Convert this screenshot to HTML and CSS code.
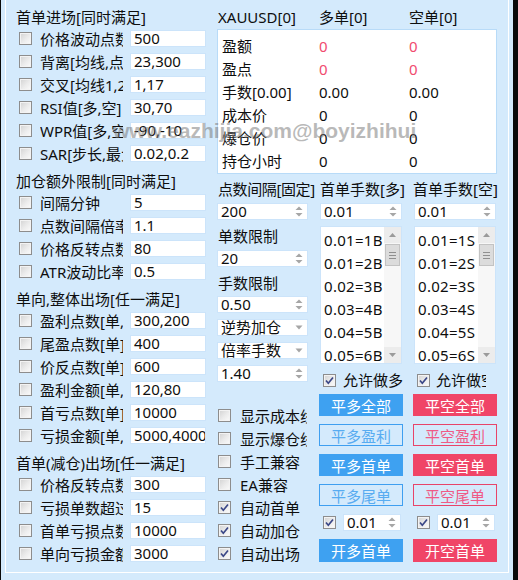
FILE: index.html
```html
<!DOCTYPE html>
<html>
<head>
<meta charset="utf-8">
<link rel="stylesheet" href="styles.css">
</head>
<body>
<div class="window">
  <div class="frame">
    <div class="left">
      <div class="sec-title first">首单进场[同时满足]</div>
      <div class="row"><span class="cb"></span><span class="lbl">价格波动点数</span><span class="inp">500</span></div>
      <div class="row"><span class="cb"></span><span class="lbl">背离[均线,点数]</span><span class="inp">23,300</span></div>
      <div class="row"><span class="cb"></span><span class="lbl">交叉[均线1,2]</span><span class="inp">1,17</span></div>
      <div class="row"><span class="cb"></span><span class="lbl">RSI值[多,空]</span><span class="inp">30,70</span></div>
      <div class="row"><span class="cb"></span><span class="lbl">WPR值[多,空]</span><span class="inp">-90,-10</span></div>
      <div class="row"><span class="cb"></span><span class="lbl">SAR[步长,最大]</span><span class="inp">0.02,0.2</span></div>

      <div class="sec-title">加仓额外限制[同时满足]</div>
      <div class="row"><span class="cb"></span><span class="lbl">间隔分钟</span><span class="inp">5</span></div>
      <div class="row"><span class="cb"></span><span class="lbl">点数间隔倍率</span><span class="inp">1.1</span></div>
      <div class="row"><span class="cb"></span><span class="lbl">价格反转点数</span><span class="inp">80</span></div>
      <div class="row"><span class="cb"></span><span class="lbl">ATR波动比率</span><span class="inp">0.5</span></div>

      <div class="sec-title">单向,整体出场[任一满足]</div>
      <div class="row"><span class="cb"></span><span class="lbl">盈利点数[单,整]</span><span class="inp">300,200</span></div>
      <div class="row"><span class="cb"></span><span class="lbl">尾盈点数[单]</span><span class="inp">400</span></div>
      <div class="row"><span class="cb"></span><span class="lbl">价反点数[单]</span><span class="inp">600</span></div>
      <div class="row"><span class="cb"></span><span class="lbl">盈利金额[单,整]</span><span class="inp">120,80</span></div>
      <div class="row"><span class="cb"></span><span class="lbl">首亏点数[单]</span><span class="inp">10000</span></div>
      <div class="row"><span class="cb"></span><span class="lbl">亏损金额[单,整]</span><span class="inp">5000,4000</span></div>

      <div class="sec-title">首单(减仓)出场[任一满足]</div>
      <div class="row"><span class="cb"></span><span class="lbl">价格反转点数</span><span class="inp">300</span></div>
      <div class="row"><span class="cb"></span><span class="lbl">亏损单数超过</span><span class="inp">15</span></div>
      <div class="row"><span class="cb"></span><span class="lbl">首单亏损点数</span><span class="inp">10000</span></div>
      <div class="row"><span class="cb"></span><span class="lbl">单向亏损金额</span><span class="inp">3000</span></div>
    </div>

    <div class="mid">
      <div class="stats-head"><span>XAUUSD[0]</span><span>多单[0]</span><span>空单[0]</span></div>
      <div class="stats">
        <div class="srow"><span>盈额</span><span class="red">0</span><span class="red">0</span></div>
        <div class="srow"><span>盈点</span><span class="red">0</span><span class="red">0</span></div>
        <div class="srow"><span>手数[0.00]</span><span>0.00</span><span>0.00</span></div>
        <div class="srow"><span>成本价</span><span>0</span><span>0</span></div>
        <div class="srow"><span>爆仓价</span><span>0</span><span>0</span></div>
        <div class="srow"><span>持仓小时</span><span>0</span><span>0</span></div>
      </div>

      <div class="cols">
        <div class="colA">
          <div class="clabel tight">点数间隔[固定]</div>
          <div class="spin s1"><span class="val">200</span><svg class="arr" width="8" height="13" viewBox="0 0 8 13"><polygon points="0.5,5 4,1.5 7.5,5" /><polygon points="0.5,8 4,11.5 7.5,8" /></svg></div>
          <div class="clabel l2">单数限制</div>
          <div class="spin s1"><span class="val">20</span><svg class="arr" width="8" height="13" viewBox="0 0 8 13"><polygon points="0.5,5 4,1.5 7.5,5" /><polygon points="0.5,8 4,11.5 7.5,8" /></svg></div>
          <div class="clabel l2">手数限制</div>
          <div class="spin s2"><span class="val">0.50</span><svg class="arr" width="8" height="13" viewBox="0 0 8 13"><polygon points="0.5,5 4,1.5 7.5,5" /><polygon points="0.5,8 4,11.5 7.5,8" /></svg></div>
          <div class="spin s3"><span class="val">逆势加仓</span><svg class="arr" width="8" height="5" viewBox="0 0 8 5"><polygon points="0.5,0.5 7.5,0.5 4,4.5" /></svg></div>
          <div class="spin s3"><span class="val">倍率手数</span><svg class="arr" width="8" height="5" viewBox="0 0 8 5"><polygon points="0.5,0.5 7.5,0.5 4,4.5" /></svg></div>
          <div class="spin s3"><span class="val">1.40</span><svg class="arr" width="8" height="13" viewBox="0 0 8 13"><polygon points="0.5,5 4,1.5 7.5,5" /><polygon points="0.5,8 4,11.5 7.5,8" /></svg></div>

          <div class="opts">
            <div class="orow"><span class="cb"></span><span class="olbl">显示成本线</span></div>
            <div class="orow"><span class="cb"></span><span class="olbl">显示爆仓线</span></div>
            <div class="orow"><span class="cb"></span><span class="olbl">手工兼容</span></div>
            <div class="orow"><span class="cb"></span><span class="olbl">EA兼容</span></div>
            <div class="orow"><span class="cb on"><svg width="11" height="11" viewBox="0 0 11 11"><path d="M2 5.5 L4.3 8.2 L9 2.5"/></svg></span><span class="olbl">自动首单</span></div>
            <div class="orow"><span class="cb on"><svg width="11" height="11" viewBox="0 0 11 11"><path d="M2 5.5 L4.3 8.2 L9 2.5"/></svg></span><span class="olbl">自动加仓</span></div>
            <div class="orow"><span class="cb on"><svg width="11" height="11" viewBox="0 0 11 11"><path d="M2 5.5 L4.3 8.2 L9 2.5"/></svg></span><span class="olbl">自动出场</span></div>
          </div>
        </div>

        <div class="colB">
          <div class="clabel">首单手数[多]</div>
          <div class="spin s1 inset"><span class="val">0.01</span><svg class="arr" width="8" height="13" viewBox="0 0 8 13"><polygon points="0.5,5 4,1.5 7.5,5" /><polygon points="0.5,8 4,11.5 7.5,8" /></svg></div>
          <div class="list">
            <div class="items">
              <div>0.01=1B</div><div>0.01=2B</div><div>0.02=3B</div><div>0.03=4B</div><div>0.04=5B</div><div>0.05=6B</div>
            </div>
            <div class="sbar">
              <div class="sbtn"><svg width="7" height="4" viewBox="0 0 7 4"><polygon points="0,4 3.5,0 7,4"/></svg></div>
              <div class="thumb"><i></i><i></i><i></i></div>
              <div class="sbtn down"><svg width="7" height="4" viewBox="0 0 7 4"><polygon points="0,0 3.5,4 7,0"/></svg></div>
            </div>
          </div>
          <div class="crow"><span class="cb on"><svg width="11" height="11" viewBox="0 0 11 11"><path d="M2 5.5 L4.3 8.2 L9 2.5"/></svg></span><span class="clbl">允许做多</span></div>
          <div class="btn blue first">平多全部</div>
          <div class="btn oblue">平多盈利</div>
          <div class="btn blue">平多首单</div>
          <div class="btn oblue">平多尾单</div>
          <div class="lotrow"><span class="cb on"><svg width="11" height="11" viewBox="0 0 11 11"><path d="M2 5.5 L4.3 8.2 L9 2.5"/></svg></span><div class="spin lot"><span class="val">0.01</span><svg class="arr" width="8" height="13" viewBox="0 0 8 13"><polygon points="0.5,5 4,1.5 7.5,5" /><polygon points="0.5,8 4,11.5 7.5,8" /></svg></div></div>
          <div class="btn blue last">开多首单</div>
        </div>

        <div class="colC">
          <div class="clabel c">首单手数[空]</div>
          <div class="spin s1 inset"><span class="val">0.01</span><svg class="arr" width="8" height="13" viewBox="0 0 8 13"><polygon points="0.5,5 4,1.5 7.5,5" /><polygon points="0.5,8 4,11.5 7.5,8" /></svg></div>
          <div class="list">
            <div class="items">
              <div>0.01=1S</div><div>0.01=2S</div><div>0.02=3S</div><div>0.03=4S</div><div>0.04=5S</div><div>0.05=6S</div>
            </div>
            <div class="sbar">
              <div class="sbtn"><svg width="7" height="4" viewBox="0 0 7 4"><polygon points="0,4 3.5,0 7,4"/></svg></div>
              <div class="thumb"><i></i><i></i><i></i></div>
              <div class="sbtn down"><svg width="7" height="4" viewBox="0 0 7 4"><polygon points="0,0 3.5,4 7,0"/></svg></div>
            </div>
          </div>
          <div class="crow"><span class="cb on"><svg width="11" height="11" viewBox="0 0 11 11"><path d="M2 5.5 L4.3 8.2 L9 2.5"/></svg></span><span class="clbl short">允许做空</span></div>
          <div class="btn red first">平空全部</div>
          <div class="btn ored">平空盈利</div>
          <div class="btn red">平空首单</div>
          <div class="btn ored">平空尾单</div>
          <div class="lotrow"><span class="cb on"><svg width="11" height="11" viewBox="0 0 11 11"><path d="M2 5.5 L4.3 8.2 L9 2.5"/></svg></span><div class="spin lot"><span class="val">0.01</span><svg class="arr" width="8" height="13" viewBox="0 0 8 13"><polygon points="0.5,5 4,1.5 7.5,5" /><polygon points="0.5,8 4,11.5 7.5,8" /></svg></div></div>
          <div class="btn red last">开空首单</div>
        </div>
      </div>
    </div>

    <div class="watermark">www.eazhijia.com@boyizhihui</div>
  </div>
</div>
</body>
</html>
```

FILE: styles.css
```css
* { box-sizing: border-box; }
html, body { margin: 0; padding: 0; }
body {
  width: 518px;
  height: 580px;
  overflow: hidden;
  background: #0a0a0a;
  font-family: "Noto Sans", "Noto Sans CJK SC", sans-serif;
  font-size: 15px;
  color: #0e0e0e;
}
.window {
  margin-left: 1px;
  width: 512px;
  height: 580px;
  background: #d4eafc;
}
.frame {
  position: relative;
  margin-left: 4px;
  width: 504px;
  height: 573px;
  border-left: 1px solid #fff;
  border-right: 1px solid #fff;
  border-bottom: 1px solid #fff;
  display: flex;
  align-items: flex-start;
  padding: 7px 0 0 10px;
}

/* left column */
.left { width: 190px; flex: none; }
.sec-title {
  height: 20px;
  line-height: 20px;
  white-space: nowrap;
  margin-top: 6px;
}
.sec-title.first { margin-top: 0; }
.row {
  height: 23px;
  display: flex;
  align-items: center;
}
.cb {
  flex: none;
  width: 13px;
  height: 13px;
  border: 1px solid #8d8d8d;
  background: linear-gradient(135deg, #d2d2d2 0%, #ececec 55%, #fbfbfb 100%);
  box-shadow: inset 0 0 0 1px #f3f3f3;
  display: flex;
  align-items: center;
  justify-content: center;
}
.row .cb { margin-left: 3px; }
.cb svg path { fill: none; stroke: #3a4787; stroke-width: 1.7; }
.lbl {
  margin-left: 8px;
  width: 83px;
  overflow: hidden;
  white-space: nowrap;
  line-height: 20px;
}
.inp {
  margin-left: 7px;
  width: 76px;
  height: 17px;
  line-height: 15px;
  background: #fff;
  border: 1px solid #cce4fa;
  padding-left: 3px;
  overflow: hidden;
  white-space: nowrap;
}

/* middle */
.mid { margin-left: 11px; width: 280px; flex: none; }
.stats-head {
  display: grid;
  grid-template-columns: 101px 90px 1fr;
  padding-left: 1px;
  height: 20px;
  line-height: 20px;
  white-space: nowrap;
}
.stats {
  margin-top: 2px;
  background: #fff;
  border: 1px solid #b8dbf8;
  padding: 5px 0 0 4px;
  height: 145px;
}
.srow {
  display: grid;
  grid-template-columns: 97px 90px 1fr;
  height: 23px;
  line-height: 23px;
  white-space: nowrap;
}
.red { color: #f14b6e; }

.cols {
  margin-top: 4px;
  display: grid;
  grid-template-columns: 92px 84px 84px;
  column-gap: 10px;
}
.clabel {
  height: 22px;
  line-height: 22px;
  padding-left: 1px;
  white-space: nowrap;
}
.clabel.tight { letter-spacing: -0.4px; }
.clabel.c { padding-left: 0; }
.clabel.l2 { margin-top: 5px; }
.spin {
  height: 17px;
  background: #fff;
  border: 1px solid #cce4fa;
  display: flex;
  align-items: center;
  padding-left: 3px;
  white-space: nowrap;
}
.spin .val { flex: 1; line-height: 15px; overflow: hidden; }
.spin .arr { flex: none; margin-right: 4px; }
.spin .arr polygon { fill: #a6a6a6; }
.colA .spin { width: 91px; }
.s1 { margin-top: 3px; }
.s2 { margin-top: 2px; }
.s3 { margin-top: 6px; }
.spin.inset { margin-left: 1px; width: 82px; }

.opts { margin-top: 22px; }
.orow {
  height: 23px;
  display: flex;
  align-items: center;
}
.orow .cb { margin-left: 1px; }
.olbl {
  margin-left: 9px;
  width: 67px;
  overflow: hidden;
  white-space: nowrap;
  line-height: 20px;
}

/* list boxes */
.list {
  margin-top: 6px;
  margin-left: 1px;
  width: 82px;
  height: 138px;
  background: #fff;
  border: 1px solid #cce4fa;
  display: flex;
  overflow: hidden;
}
.items {
  flex: 1;
  overflow: hidden;
  padding: 2px 0 0 3px;
  white-space: nowrap;
}
.items div { height: 23px; line-height: 23px; letter-spacing: 0.3px; }
.sbar {
  flex: none;
  width: 17px;
  display: flex;
  flex-direction: column;
  background: #f7f7f7;
}
.sbtn {
  height: 16px;
  background: #ececec;
  display: flex;
  align-items: center;
  justify-content: center;
}
.sbtn svg polygon { fill: #9a9a9a; }
.sbtn.down { margin-top: auto; }
.thumb {
  margin: 1px 1px 0 1px;
  height: 22px;
  background: #dcdcdc;
  border: 1px solid #c3c3c3;
  display: flex;
  flex-direction: column;
  align-items: center;
  justify-content: center;
  gap: 2px;
}
.thumb i { display: block; width: 7px; height: 1px; background: #8f8f8f; }

.crow {
  margin-top: 5px;
  height: 22px;
  display: flex;
  align-items: center;
}
.crow .cb { margin-left: 4px; }
.clbl {
  margin-left: 7px;
  width: 60px;
  overflow: hidden;
  white-space: nowrap;
  line-height: 20px;
}
.clbl.short { margin-left: 6px; width: 50px; }

.btn {
  height: 22px;
  margin-top: 8px;
  display: flex;
  align-items: center;
  justify-content: center;
  color: #fff;
  white-space: nowrap;
}
.btn.first { margin-top: 3px; }
.btn.last { height: 23px; }
.btn.blue { background: #3ea1f1; }
.btn.red { background: #f04567; }
.btn.oblue { border: 1px solid #3f9ff0; color: #58acf1; }
.btn.ored { border: 1px solid #e84469; color: #f05a86; }

.lotrow {
  margin-top: 8px;
  height: 17px;
  display: flex;
  align-items: center;
}
.lotrow .cb { margin-left: 4px; }
.spin.lot { margin-left: 7px; width: 58px; }

.watermark {
  position: absolute;
  left: 107px;
  top: 119px;
  font-family: "Liberation Sans", Arial, sans-serif;
  font-weight: bold;
  font-size: 21px;
  line-height: 24px;
  color: rgba(115, 115, 115, 0.5);
  white-space: nowrap;
}
```
